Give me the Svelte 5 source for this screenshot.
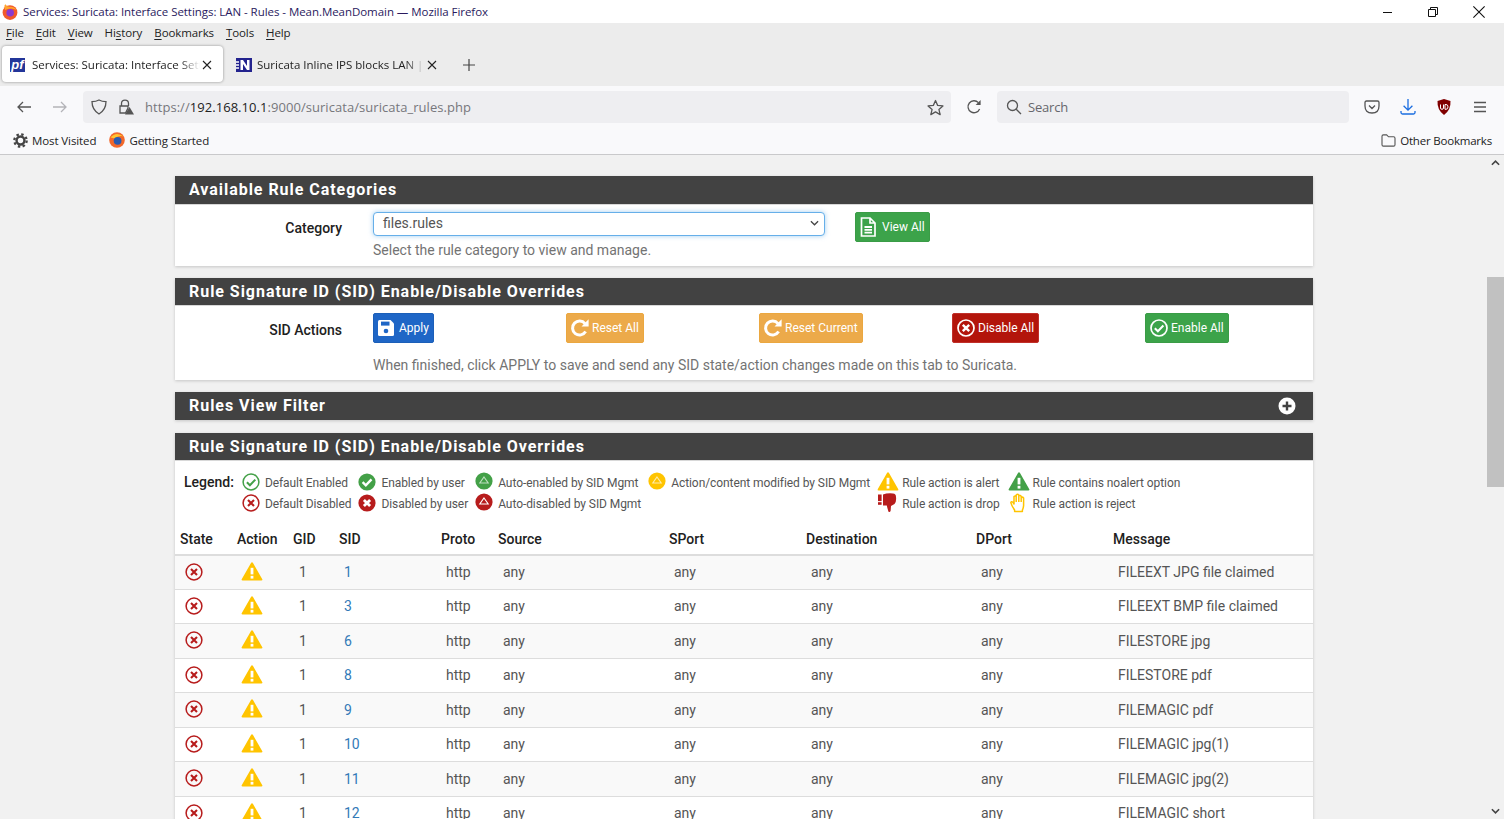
<script>
  const menus = [["F", "ile"], ["E", "dit"], ["V", "iew"], ["Hi", "story", "s"], ["B", "ookmarks"], ["T", "ools"], ["H", "elp"]];

  const legend = [
    [["ok-o", "Default Enabled"], ["no-o", "Default Disabled"]],
    [["ok", "Enabled by user"], ["no", "Disabled by user"]],
    [["up-green", "Auto-enabled by SID Mgmt"], ["up-red", "Auto-disabled by SID Mgmt"]],
    [["up-yellow", "Action/content modified by SID Mgmt"]],
    [["warn", "Rule action is alert"], ["drop", "Rule action is drop"]],
    [["warn-green", "Rule contains noalert option"], ["hand", "Rule action is reject"]],
  ];

  const columns = ["State", "Action", "GID", "SID", "Proto", "Source", "SPort", "Destination", "DPort", "Message"];

  const rows = [
    [1, "FILEEXT JPG file claimed"],
    [3, "FILEEXT BMP file claimed"],
    [6, "FILESTORE jpg"],
    [8, "FILESTORE pdf"],
    [9, "FILEMAGIC pdf"],
    [10, "FILEMAGIC jpg(1)"],
    [11, "FILEMAGIC jpg(2)"],
    [12, "FILEMAGIC short"],
  ];
</script>

{#snippet redo()}
  <svg class="btn-icon" viewBox="0 0 20 20" width="20" height="20">
    <path d="M15.6 13.6 A7 7 0 1 1 15 5.6" fill="none" stroke="#fff" stroke-width="3" />
    <path d="M11.5 8.4 H18.6 V1.3 Z" fill="#fff" />
  </svg>
{/snippet}

{#snippet icon(name)}
  <svg class="ico" viewBox="0 0 20 20" width="20" height="20">
    {#if name === "ok-o"}
      <circle cx="10" cy="10" r="7.9" fill="none" stroke="#43a047" stroke-width="1.5" />
      <path d="M5.9 10.2 L8.9 13.2 L14.3 7.6" fill="none" stroke="#43a047" stroke-width="2" />
    {:else if name === "no-o"}
      <circle cx="10" cy="10" r="7.9" fill="none" stroke="#b71c1c" stroke-width="1.5" />
      <path d="M7 7 L13 13 M13 7 L7 13" fill="none" stroke="#b71c1c" stroke-width="2.1" />
    {:else if name === "ok"}
      <circle cx="10" cy="10" r="8.6" fill="#43a047" />
      <path d="M5.6 10.2 L8.8 13.3 L14.5 7.4" fill="none" stroke="#fff" stroke-width="2.4" />
    {:else if name === "no"}
      <circle cx="10" cy="10" r="8.6" fill="#b71c1c" />
      <path d="M6.9 6.9 L13.1 13.1 M13.1 6.9 L6.9 13.1" fill="none" stroke="#fff" stroke-width="2.8" />
    {:else if name === "up-green" || name === "up-red" || name === "up-yellow"}
      <circle cx="10" cy="9" r="8.6" fill={name === "up-green" ? "#43a047" : name === "up-red" ? "#b71c1c" : "#ffc400"} />
      <path d="M10 5 L14.2 11 H5.800 Z" fill="none" stroke={name === "up-red" ? "#fff" : "#ffffffaa"} stroke-width="1.1" />
    {:else if name === "warn" || name === "warn-green"}
      <path d="M10 .2 Q10.600 .2 11 1 L20.300 17.200 Q20.800 18.600 19.400 18.600 H.6 Q-.8 18.600 -.3 17.200 L9 1 Q9.400 .2 10 .2 Z" fill={name === "warn" ? "#ffc400" : "#43a047"} />
      <rect x="8.600" y="5.800" width="2.800" height="6.600" fill="#fff" />
      <rect x="8.600" y="13.800" width="2.800" height="2.800" fill="#fff" />
    {:else if name === "drop"}
      <rect x="0" y="1.5" width="3.6" height="6.6" fill="#b71c1c" />
      <rect x="0" y="9.2" width="3.6" height="2.6" fill="#b71c1c" />
      <path d="M5 1.6 Q9 -.2 15 .4 Q18 .6 18 4 Q18.6 9 16.5 11 L13 13 L12.6 18 Q11.6 19.6 10.4 18.4 Q9.2 14.6 8.8 12.6 H5 Z" fill="#b71c1c" />
    {:else if name === "hand"}
      <path d="M5.6 17 Q2.6 12.6 1.8 9.6 Q2.2 8 3.8 9.2 L5 11 V3.6 Q6.2 2.2 7.2 3.6 V2 Q8.6 .6 9.8 2 V3 Q11.2 2 12.2 3.4 V4.4 Q13.6 3.6 14.6 5 V12.6 Q14.4 15 13.4 17 V18.6 H5.6 Z M7.2 3.6 V9 M9.8 2 V9 M12.2 3.4 V9" fill="none" stroke="#ffc400" stroke-width="1.5" stroke-linejoin="round" />
    {/if}
  </svg>
{/snippet}

<div class="window">
  <div class="titlebar">
    <svg class="ff" viewBox="0 0 16 16" width="16" height="16">
      <circle cx="8" cy="8.6" r="7.400" fill="#f2592b" />
      <path d="M2.500 3 Q2 1.500 3.400 .2 Q5 3 8 2.800 Q12 2.500 14.500 6 Q9 3 3 6 Z" fill="#ffa42e" />
      <circle cx="8.200" cy="8.800" r="3.800" fill="#8a3ad0" />
    </svg>
    <span class="title">Services: Suricata: Interface Settings: LAN - Rules - Mean.MeanDomain — Mozilla Firefox</span>
    <div class="winctl">
      <svg viewBox="0 0 10 10" width="10" height="10"><path d="M0 5.5 H9" stroke="#111" fill="none" /></svg>
      <svg viewBox="0 0 10 10" width="10" height="10"><path d="M.5 2.5 H7.5 V9.5 H.5 Z M2.5 2.5 V.5 H9.5 V7.5 H7.5" stroke="#111" fill="none" /></svg>
      <svg viewBox="0 0 10 10" width="12" height="12"><path d="M.3 .3 L9.7 9.7 M9.7 .3 L.3 9.7" stroke="#111" fill="none" stroke-width=".9" /></svg>
    </div>
  </div>

  <div class="menubar">
    {#each menus as m}
      <span class="menu">
        {#if m[2]}{m[0]}<u>{m[2]}</u>{m[1].slice(1)}{:else}<u>{m[0]}</u>{m[1]}{/if}
      </span>
    {/each}
  </div>

  <div class="tabs">
    <div class="tab active">
      <span class="pf">pf</span>
      <span class="tab-label">Services: Suricata: Interface Settings: LAN - Rules</span>
      <svg class="tab-x" viewBox="0 0 10 10" width="10" height="10"><path d="M1 1 L9 9 M9 1 L1 9" stroke="#222" fill="none" stroke-width="1.1" /></svg>
    </div>
    <div class="tab">
      <svg class="netgate" viewBox="0 0 16 14" width="16" height="14">
        <rect width="16" height="14" fill="#23238e" />
        <path d="M0 4 H3 M0 7 H3 M0 10 H3" stroke="#fff" stroke-width="1.4" />
        <path d="M4.5 12 V2 H7 L11 8 V2 H13.5 V12 H11 L7 6 V12 Z" fill="#fff" />
      </svg>
      <span class="tab-label">Suricata Inline IPS blocks LAN | pfSense</span>
      <svg class="tab-x" viewBox="0 0 10 10" width="10" height="10"><path d="M1 1 L9 9 M9 1 L1 9" stroke="#222" fill="none" stroke-width="1.1" /></svg>
    </div>
    <svg class="plus" viewBox="0 0 12 12" width="12" height="12"><path d="M6 0 V12 M0 6 H12" stroke="#444" fill="none" stroke-width="1.2" /></svg>
  </div>

  <div class="navbar">
    <svg class="nav-btn" viewBox="0 0 16 16" width="16" height="16"><path d="M15 8 H2 M7 3 L2 8 L7 13" fill="none" stroke="#555" stroke-width="1.3" /></svg>
    <svg class="nav-btn fwd" viewBox="0 0 16 16" width="16" height="16"><path d="M1 8 H14 M9 3 L14 8 L9 13" fill="none" stroke="#b4b4b8" stroke-width="1.3" /></svg>
    <div class="urlbar">
      <svg viewBox="0 0 16 16" width="16" height="16"><path d="M8 1 Q11 2.6 15 2.6 Q15 11 8 15 Q1 11 1 2.6 Q5 2.6 8 1 Z" fill="none" stroke="#555" stroke-width="1.3" /></svg>
      <svg class="lock" viewBox="0 0 16 16" width="16" height="16">
        <path d="M3.5 7 V4.5 Q3.5 1.2 7 1.2 Q10.5 1.2 10.5 4.5 V7" fill="none" stroke="#555" stroke-width="1.3" />
        <path d="M2 7 H10 V9 L7.5 14 H2 Z" fill="none" stroke="#555" stroke-width="1.3" />
        <path d="M11.5 8 L16 15.5 H7 Z" fill="#555" />
      </svg>
      <span class="url"><span class="dim">https://</span>192.168.10.1<span class="dim">:9000/suricata/suricata_rules.php</span></span>
      <svg class="star" viewBox="0 0 16 16" width="17" height="17"><path d="M8 1.4 L10 6 L15 6.5 L11.2 9.8 L12.4 14.7 L8 12.1 L3.6 14.7 L4.8 9.8 L1 6.5 L6 6 Z" fill="none" stroke="#555" stroke-width="1.2" stroke-linejoin="round" /></svg>
    </div>
    <svg class="reload" viewBox="0 0 16 16" width="16" height="16"><path d="M13.6 10 A6 6 0 1 1 12.4 3.6" fill="none" stroke="#555" stroke-width="1.3" /><path d="M9.6 6 H14.6 V1 Z" fill="#555" /></svg>
    <div class="searchbar">
      <svg viewBox="0 0 16 16" width="16" height="16"><circle cx="6.5" cy="6.5" r="5" fill="none" stroke="#555" stroke-width="1.3" /><path d="M10.2 10.2 L15 15" stroke="#555" stroke-width="1.3" /></svg>
      <span>Search</span>
    </div>
    <div class="tools">
      <svg viewBox="0 0 16 16" width="16" height="16"><path d="M2.5 2 H13.5 Q15 2 15 3.5 V7 Q15 14 8 14 Q1 14 1 7 V3.5 Q1 2 2.5 2 Z M5 6.5 L8 9.5 L11 6.5" fill="none" stroke="#555" stroke-width="1.3" /></svg>
      <svg viewBox="0 0 16 16" width="16" height="16"><path d="M8 0 V11 M3.6 6.8 L8 11.2 L12.4 6.8 M1 12 V13.5 Q1 15 2.5 15 H13.5 Q15 15 15 13.5 V12" fill="none" stroke="#1a6de0" stroke-width="1.3" /></svg>
      <svg viewBox="0 0 16 16" width="16" height="16">
        <path d="M8 0 L14.5 2 Q15 11 8 16 Q1 11 1.500 2 Z" fill="#800000" />
        <path d="M4.5 5.500 V9 Q4.500 10.300 6 10.300 Q7.500 10.300 7.500 9 V5.500 M9 5.500 V10.300 H10 Q12 10.300 12 7.900 Q12 5.500 10 5.500 Z" fill="none" stroke="#fff" stroke-width="1" />
      </svg>
      <svg viewBox="0 0 16 16" width="16" height="16"><path d="M2 3.500 H14 M2 8 H14 M2 12.500 H14" stroke="#555" stroke-width="1.300" fill="none" /></svg>
    </div>
  </div>

  <div class="bookmarks">
    <svg class="gear" viewBox="0 0 16 16" width="15" height="15">
      <circle cx="8" cy="8" r="4.200" fill="none" stroke="#444" stroke-width="2.600" />
      <circle cx="8" cy="8" r="6.600" fill="none" stroke="#444" stroke-width="2.400" stroke-dasharray="2.600 2.580" />
    </svg>
    <span class="bm">Most Visited</span>
    <svg class="ffb" viewBox="0 0 16 16" width="16" height="16">
      <circle cx="8" cy="8" r="7.800" fill="#f2682b" />
      <path d="M1.500 5.500 Q7 -1 14.800 4.500 Q10 3 6 6.500 Z" fill="#ffc42e" />
      <circle cx="8.600" cy="8.800" r="3.900" fill="#2a5bb0" />
    </svg>
    <span class="bm">Getting Started</span>
    <span class="bm-right">
      <svg viewBox="0 0 16 14" width="15" height="13"><path d="M1 2.500 Q1 1 2.500 1 H6 L8 3 H13.500 Q15 3 15 4.500 V11.500 Q15 13 13.500 13 H2.500 Q1 13 1 11.500 Z" fill="none" stroke="#555" stroke-width="1.200" /></svg>
      <span class="bm">Other Bookmarks</span>
    </span>
  </div>

  <div class="viewport">
    <main class="page">
      <section class="panel first">
        <h2>Available Rule Categories</h2>
        <div class="row category">
          <div class="label">Category</div>
          <div class="field">
            <div class="select">
              <span>files.rules</span>
              <svg viewBox="0 0 10 6" width="9" height="6"><path d="M1 1 L5 5 L9 1" fill="none" stroke="#444" stroke-width="1.400" /></svg>
            </div>
            <p class="help">Select the rule category to view and manage.</p>
          </div>
          <button class="btn green view-all">
            <svg class="btn-icon" viewBox="0 0 16 20" width="16" height="20">
              <path d="M1.500 1 H10 L15 6 V19 H1.500 Z M10 1 V6 H15" fill="none" stroke="#fff" stroke-width="1.700" />
              <path d="M4.500 10 H12 M4.500 12.800 H12 M4.500 15.600 H12" stroke="#fff" stroke-width="1.800" />
            </svg>
            View All
          </button>
        </div>
      </section>

      <section class="panel">
        <h2>Rule Signature ID (SID) Enable/Disable Overrides</h2>
        <div class="row actions">
          <div class="label">SID Actions</div>
          <div class="field">
            <div class="btns">
              <div class="slot">
                <button class="btn blue">
                  <svg class="btn-icon" viewBox="0 0 18 18" width="18" height="18">
                    <path d="M1 2.500 Q1 1 2.500 1 H13.500 L17 4.500 V15.500 Q17 17 15.500 17 H2.500 Q1 17 1 15.500 Z" fill="#fff" />
                    <rect x="4" y="2.600" width="8.500" height="4" fill="#1f66c6" />
                    <circle cx="9" cy="12" r="2.300" fill="#1f66c6" />
                  </svg>
                  Apply
                </button>
              </div>
              <div class="slot"><button class="btn orange">{@render redo()}Reset All</button></div>
              <div class="slot"><button class="btn orange">{@render redo()}Reset Current</button></div>
              <div class="slot">
                <button class="btn red">
                  <svg class="btn-icon" viewBox="0 0 20 20" width="20" height="20">
                    <circle cx="10" cy="10" r="8" fill="none" stroke="#fff" stroke-width="1.700" />
                    <path d="M6.800 6.800 L13.200 13.200 M13.200 6.800 L6.800 13.200" stroke="#fff" stroke-width="2.400" />
                  </svg>
                  Disable All
                </button>
              </div>
              <div class="slot">
                <button class="btn green">
                  <svg class="btn-icon" viewBox="0 0 20 20" width="20" height="20">
                    <circle cx="10" cy="10" r="8" fill="none" stroke="#fff" stroke-width="1.700" />
                    <path d="M5.800 10.200 L8.900 13.300 L14.400 7.500" fill="none" stroke="#fff" stroke-width="2" />
                  </svg>
                  Enable All
                </button>
              </div>
            </div>
            <p class="help">When finished, click APPLY to save and send any SID state/action changes made on this tab to Suricata.</p>
          </div>
        </div>
      </section>

      <section class="panel collapsed">
        <h2>
          Rules View Filter
          <svg class="expand" viewBox="0 0 18 18" width="18" height="18">
            <circle cx="9" cy="9" r="8.500" fill="#fff" />
            <path d="M9 4.500 V13.500 M4.500 9 H13.500" stroke="#424242" stroke-width="2.400" />
          </svg>
        </h2>
      </section>

      <section class="panel">
        <h2>Rule Signature ID (SID) Enable/Disable Overrides</h2>
        <div class="legend">
          <strong>Legend:</strong>
          {#each legend as col}
            <div class="legend-col">
              {#each col as item}
                <div class="legend-item">{@render icon(item[0])}<span>{item[1]}</span></div>
              {/each}
            </div>
          {/each}
        </div>
        <table>
          <thead>
            <tr>
              {#each columns as c}<th>{c}</th>{/each}
            </tr>
          </thead>
          <tbody>
            {#each rows as r, i}
              <tr class:odd={i % 2 === 0}>
                <td class="state">{@render icon("no-o")}</td>
                <td class="action">{@render icon("warn")}</td>
                <td class="gid">1</td>
                <td class="sid"><a href="#top">{r[0]}</a></td>
                <td>http</td>
                <td>any</td>
                <td>any</td>
                <td>any</td>
                <td>any</td>
                <td>{r[1]}</td>
              </tr>
            {/each}
          </tbody>
        </table>
      </section>
    </main>

    <div class="scrollbar">
      <svg viewBox="0 0 10 6" width="9" height="6"><path d="M1 5 L5 1 L9 5" fill="none" stroke="#444" stroke-width="1.800" /></svg>
      <div class="track"><div class="thumb"></div></div>
      <svg viewBox="0 0 10 6" width="9" height="6"><path d="M1 1 L5 5 L9 1" fill="none" stroke="#444" stroke-width="1.800" /></svg>
    </div>
  </div>
</div>

<style>
  :global(body) {
    margin: 0;
    background: #f1f1f1;
  }

  .window {
    height: 819px;
    overflow: hidden;
    display: flex;
    flex-direction: column;
    font-family: "Open Sans", "Noto Sans", sans-serif;
    font-size: 11.5px;
    color: #222;
  }

  .titlebar {
    height: 23px;
    flex: none;
    background: #fff;
    display: flex;
    align-items: center;
    padding-left: 2px;
    color: #2a1a5e;
  }
  .title {
    margin-left: 5px;
    font-size: 11.5px;
    letter-spacing: -0.05px;
    white-space: nowrap;
  }
  .winctl {
    margin-left: auto;
    display: flex;
    align-items: center;
    gap: 35px;
    padding-right: 19px;
  }

  .menubar {
    height: 21px;
    flex: none;
    background: #ececec;
    display: flex;
    align-items: center;
    gap: 12px;
    padding: 0 0 2px 6px;
    box-sizing: border-box;
    letter-spacing: -0.1px;
  }
  .menu u {
    text-underline-offset: 2px;
  }

  .tabs {
    height: 42px;
    flex: none;
    background: #ececec;
    display: flex;
    align-items: center;
    padding: 0 0 2px 2px;
    box-sizing: border-box;
  }
  .tab {
    width: 221px;
    height: 36px;
    box-sizing: border-box;
    display: flex;
    align-items: center;
    padding: 1px 9px 0 8px;
    border-radius: 4px;
    margin-right: 3px;
  }
  .tab.active {
    background: #fff;
    box-shadow: 0 0 3px #0006;
    margin-right: 13px;
  }
  .tab:not(.active) {
    width: 206px;
    padding: 1px 3px 0 0;
  }
  .tab-label {
    margin-left: 5px;
    flex: 1;
    white-space: nowrap;
    overflow: hidden;
    -webkit-mask-image: linear-gradient(to right, #000 88%, transparent);
    mask-image: linear-gradient(to right, #000 88%, transparent);
  }
  .tab.active .tab-label {
    margin-left: 7px;
  }
  .tab-x {
    margin-left: 2px;
    margin-right: 2px;
    flex: none;
  }
  .pf {
    width: 15px;
    height: 14px;
    flex: none;
    background: #23369a;
    color: #fff;
    font: italic 700 13px/13px "Liberation Sans", sans-serif;
    text-align: center;
  }
  .netgate {
    flex: none;
  }
  .plus {
    margin: 2px 0 0 18px;
  }

  .navbar {
    height: 42px;
    flex: none;
    background: #f9f9fb;
    display: flex;
    align-items: center;
    padding-left: 16px;
    box-sizing: border-box;
  }
  .nav-btn {
    margin-right: 20px;
  }
  .nav-btn.fwd {
    margin-right: 15px;
  }
  .urlbar {
    width: 868px;
    height: 32px;
    box-sizing: border-box;
    background: #eeeef1;
    border-radius: 4px;
    display: flex;
    align-items: center;
    padding: 0 7px 0 8px;
  }
  .lock {
    margin-left: 11px;
  }
  .url {
    margin-left: 11px;
    font-size: 13px;
    color: #222;
    flex: 1;
    letter-spacing: 0.05px;
  }
  .dim {
    color: #77777c;
  }
  .reload {
    margin-left: 15px;
    margin-right: 15px;
  }
  .searchbar {
    width: 352px;
    height: 32px;
    box-sizing: border-box;
    background: #eeeef1;
    border-radius: 4px;
    display: flex;
    align-items: center;
    padding-left: 9px;
    gap: 6px;
    font-size: 13px;
    letter-spacing: -0.2px;
    color: #66666c;
  }
  .tools {
    display: flex;
    gap: 20px;
    margin-left: 15px;
  }

  .bookmarks {
    height: 27px;
    flex: none;
    box-sizing: border-box;
    background: #f9f9fb;
    border-bottom: 1px solid #c9c9cb;
    display: flex;
    align-items: center;
    padding: 0 12px 2px 13px;
    letter-spacing: -0.1px;
  }
  .gear {
    margin-right: 4px;
  }
  .ffb {
    margin: 0 4px 0 13px;
  }
  .bm-right {
    margin-left: auto;
    display: flex;
    align-items: center;
    gap: 4px;
    letter-spacing: -0.2px;
  }

  .viewport {
    flex: 1;
    min-height: 0;
    display: flex;
    font-family: Roboto, sans-serif;
    font-size: 14px;
    background: #f1f1f1;
  }
  .page {
    flex: 1;
    min-width: 0;
    padding: 21px 174px 0 175px;
    box-sizing: border-box;
  }

  .panel {
    background: #fff;
    margin-bottom: 12px;
    box-shadow: 0 1px 3px #0000002e;
  }
  .panel h2 {
    margin: 0;
    height: 27px;
    padding: 0 14px;
    background: #424242;
    color: #fff;
    font-size: 16px;
    font-weight: 700;
    letter-spacing: 0.96px;
    line-height: 28px;
    display: flex;
    align-items: center;
    justify-content: space-between;
    border-bottom: 1px solid #d8d8d8;
    box-sizing: content-box;
  }
  .panel.first h2 {
    height: 28px;
  }
  .panel.collapsed {
    margin-bottom: 13px;
  }
  .panel.collapsed h2 {
    border-bottom: 0;
    height: 28px;
  }
  .expand {
    margin-right: 3px;
  }

  .row {
    display: flex;
    align-items: flex-start;
  }
  .label {
    width: 167px;
    text-align: right;
    font-weight: 500;
    color: #212121;
    flex: none;
  }
  .field {
    margin-left: 31px;
  }
  .category {
    height: 61px;
    padding-top: 7px;
    box-sizing: border-box;
  }
  .category .label {
    padding-top: 8px;
  }
  .select {
    width: 452px;
    height: 24px;
    box-sizing: border-box;
    border: 1px solid #66afe9;
    border-radius: 4px;
    box-shadow: 0 0 5px #66afe999;
    display: flex;
    align-items: center;
    justify-content: space-between;
    padding: 0 5px 2px 9px;
    color: #555;
    background: #fff;
  }
  .help {
    margin: 6px 0 0;
    line-height: 16px;
    color: #737373;
  }

  .btn {
    height: 30px;
    box-sizing: border-box;
    padding: 0 4px 0 3px;
    border: 1px solid;
    border-radius: 2px;
    color: #fff;
    font: 12px Roboto, sans-serif;
    display: inline-flex;
    align-items: center;
    gap: 2px;
  }
  .btn.view-all {
    margin: 0 0 0 30px;
    padding-left: 4px;
    gap: 6px;
  }
  .btn-icon {
    flex: none;
  }
  .blue {
    background: #1f66c6;
    border-color: #1c5fb8;
    gap: 4px;
  }
  .orange {
    background: #ecaa4a;
    border-color: #eba73f;
  }
  .red {
    background: #b3150b;
    border-color: #c0302a;
  }
  .green {
    background: #3ca34a;
    border-color: #3a9c46;
  }

  .actions {
    height: 74px;
    padding-top: 7px;
    box-sizing: border-box;
  }
  .actions .label {
    padding-top: 9px;
  }
  .btns {
    display: flex;
  }
  .slot {
    width: 193px;
    flex: none;
  }
  .actions .help {
    margin-top: 14px;
  }

  .legend {
    display: flex;
    align-items: flex-start;
    padding: 10px 0 0 9px;
    height: 57px;
    box-sizing: border-box;
    font-size: 12px;
    letter-spacing: -0.07px;
    color: #555;
  }
  .legend strong {
    font-size: 14px;
    font-weight: 500;
    color: #212121;
    line-height: 23px;
    margin-right: 7px;
    letter-spacing: 0;
  }
  .legend-col {
    margin-right: 6px;
  }
  .legend-col:nth-of-type(4) {
    margin-right: 8px;
  }
  .legend-col:nth-of-type(5) {
    margin-right: 9px;
  }
  .legend-item {
    display: flex;
    align-items: center;
    gap: 4px;
    height: 21.500px;
    white-space: nowrap;
  }
  .legend-item span {
    padding-top: 2px;
  }
  .ico {
    flex: none;
    overflow: visible;
  }

  table {
    width: 1138px;
    table-layout: fixed;
    border-collapse: collapse;
    margin-top: 9.500px;
  }
  th {
    height: 27px;
    padding: 0 5px 4px;
    text-align: left;
    font-weight: 500;
    font-size: 14px;
    color: #212121;
    border-bottom: 2px solid #ddd;
    box-sizing: border-box;
  }
  th:nth-child(1) { width: 57px; }
  th:nth-child(2) { width: 56px; }
  th:nth-child(3) { width: 46px; }
  th:nth-child(4) { width: 102px; }
  th:nth-child(5) { width: 57px; }
  th:nth-child(6) { width: 171px; }
  th:nth-child(7) { width: 137px; }
  th:nth-child(8) { width: 170px; }
  th:nth-child(9) { width: 137px; }
  td {
    height: 34.500px;
    padding: 0 10px;
    color: #555;
    border-bottom: 1px solid #ddd;
    box-sizing: border-box;
    white-space: nowrap;
  }
  tr.odd td {
    background: #f9f9f9;
  }
  td.state {
    padding: 0 0 0 9px;
  }
  td.action {
    padding: 0 0 0 10px;
  }
  td .ico {
    display: block;
    margin-top: -1px;
  }
  td.gid {
    padding: 0 0 0 11px;
  }
  td.sid a {
    color: #337ab7;
    text-decoration: none;
  }

  .scrollbar {
    width: 17px;
    flex: none;
    background: #f1f1f1;
    display: flex;
    flex-direction: column;
    align-items: center;
    padding: 5px 0;
    box-sizing: border-box;
  }
  .track {
    flex: 1;
    width: 100%;
    padding-top: 111px;
    box-sizing: border-box;
  }
  .thumb {
    height: 210px;
    background: #c1c1c1;
  }
</style>
